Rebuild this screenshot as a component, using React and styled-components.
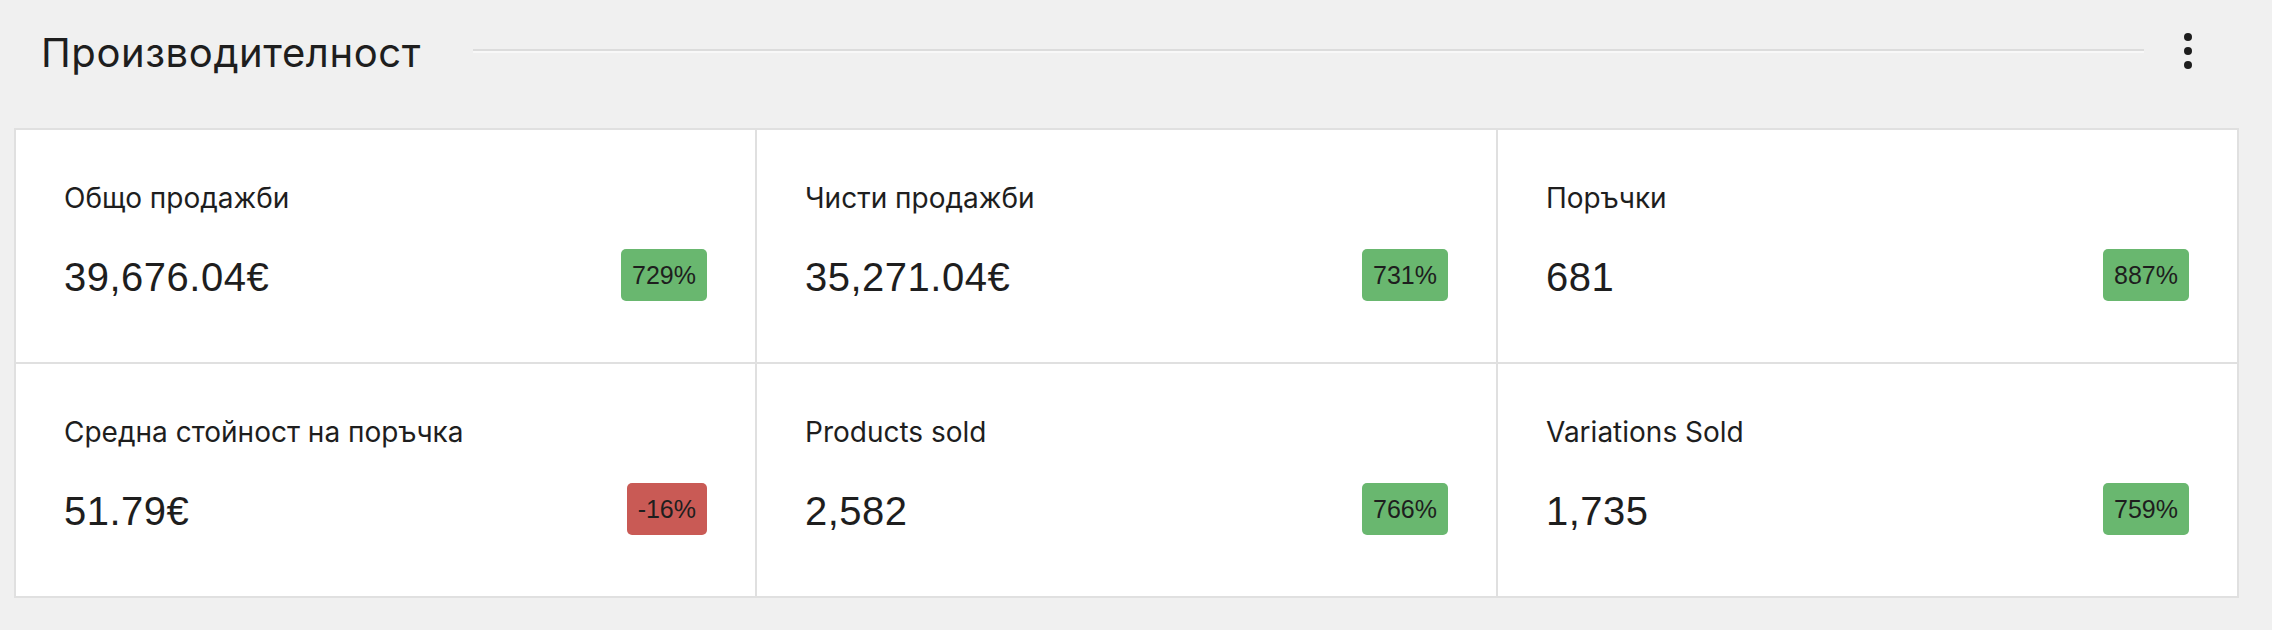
import React from "react";
import styled, { createGlobalStyle } from "styled-components";

const GlobalStyle = createGlobalStyle`
  html, body {
    margin: 0;
    padding: 0;
    background: #f0f0f0;
  }
  body {
    font-family: "Liberation Sans", Arial, sans-serif;
    color: #1e1e1e;
  }
`;

const Page = styled.div`
  padding: 0 33px 32px 14px;
`;

const Header = styled.div`
  display: flex;
  align-items: center;
  height: 106px;
  padding: 0 27px;
  margin-bottom: 22px;
`;

const Title = styled.h2`
  margin: 0;
  font-family: Inter, "Liberation Sans", sans-serif;
  font-size: 40px;
  font-weight: 400;
  line-height: 48px;
  letter-spacing: 0.6px;
`;

const Rule = styled.hr`
  flex: 1;
  margin: 0 20px 5px 52px;
  border: 0;
  border-top: 2px solid #dcdcdc;
  border-bottom: 2px solid #f8f8f8;
`;

const MenuButton = styled.button`
  width: 48px;
  height: 48px;
  margin-bottom: 4px;
  padding: 0;
  border: 0;
  background: none;
  display: flex;
  flex-direction: column;
  align-items: center;
  justify-content: center;
  gap: 6px;
  cursor: pointer;
`;

const Dot = styled.span`
  width: 8px;
  height: 8px;
  border-radius: 50%;
  background: #1e1e1e;
`;

const Summary = styled.ul`
  list-style: none;
  margin: 0;
  padding: 0;
  display: grid;
  grid-template-columns: repeat(3, 1fr);
  background: #fff;
  border-top: 2px solid #e0e0e0;
  border-left: 2px solid #e0e0e0;
`;

const Item = styled.li`
  padding: 50px 48px 61px;
  border-right: 2px solid #e0e0e0;
  border-bottom: 2px solid #e0e0e0;
`;

const Label = styled.div`
  font-family: Inter, "Liberation Sans", sans-serif;
  font-size: 28px;
  line-height: 36px;
  margin-bottom: 33px;
`;

const ValueRow = styled.div`
  display: flex;
  justify-content: space-between;
  align-items: flex-end;
`;

const Value = styled.div`
  font-size: 40px;
  line-height: 48px;
  letter-spacing: 0.5px;
`;

const Delta = styled.span`
  font-size: 25px;
  line-height: 32px;
  padding: 10px 11px;
  border-radius: 5px;
  color: #1e1e1e;
  background: ${(props) => (props.$down ? "#c95a55" : "#69b76f")};
`;

const stats = [
  { label: "Общо продажби", value: "39,676.04€", delta: "729%" },
  { label: "Чисти продажби", value: "35,271.04€", delta: "731%" },
  { label: "Поръчки", value: "681", delta: "887%" },
  { label: "Средна стойност на поръчка", value: "51.79€", delta: "-16%", down: true },
  { label: "Products sold", value: "2,582", delta: "766%" },
  { label: "Variations Sold", value: "1,735", delta: "759%" },
];

const App = () => {
  return (
    <Page lang="bg">
      <GlobalStyle />
      <Header>
        <Title>Производителност</Title>
        <Rule />
        <MenuButton aria-label="Още">
          <Dot />
          <Dot />
          <Dot />
        </MenuButton>
      </Header>

      <Summary>
        {stats.map((s) => (
          <Item key={s.label}>
            <Label>{s.label}</Label>
            <ValueRow>
              <Value>{s.value}</Value>
              <Delta $down={s.down}>{s.delta}</Delta>
            </ValueRow>
          </Item>
        ))}
      </Summary>
    </Page>
  );
};

export default App;
